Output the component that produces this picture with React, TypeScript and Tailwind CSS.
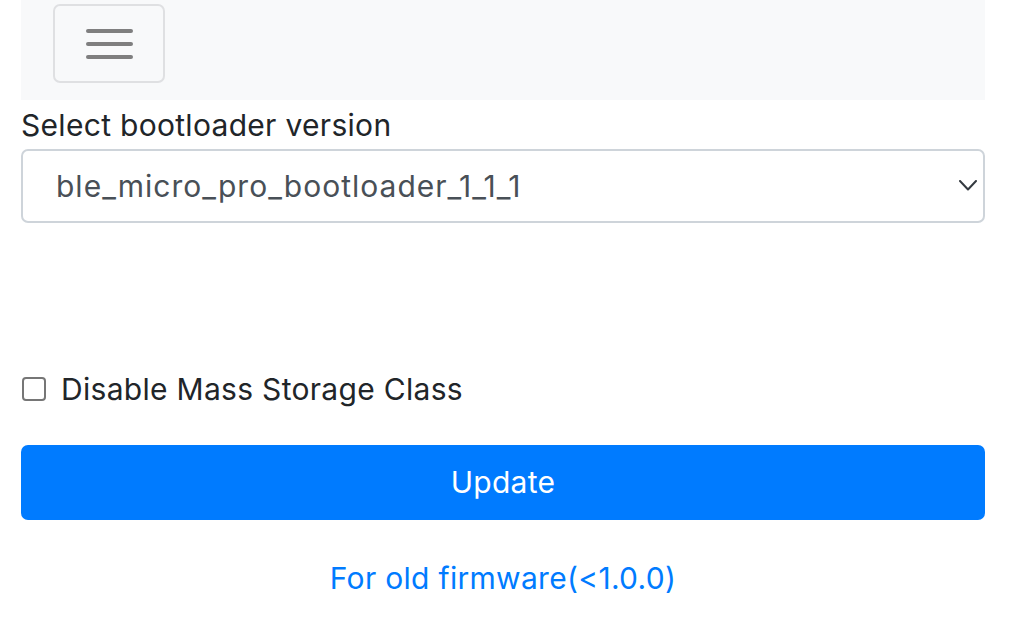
export default function App() {
  return (
    <div className="w-[1011px] h-[624px] overflow-hidden bg-white text-[#212529] tracking-[0.3px]" style={{ fontFamily: 'Inter, "Liberation Sans", Arial, sans-serif' }}>
      <div className="mx-[21px] w-[964px]">
        {/* Navbar */}
        <nav className="h-[100px] bg-[#f8f9fa] pl-[32px] pt-[4px]">
          <button className="flex h-[79px] w-[112px] flex-col items-center justify-center gap-[9px] rounded-[7px] border-2 border-[#dfe0e2]">
            <span className="h-[4px] w-[47px] rounded bg-[#7f7f7f]" />
            <span className="h-[4px] w-[47px] rounded bg-[#7f7f7f]" />
            <span className="h-[4px] w-[47px] rounded bg-[#7f7f7f]" />
          </button>
        </nav>

        {/* Bootloader select */}
        <label className="mt-[4px] block text-[30px] leading-[42px]">Select bootloader version</label>
        <div className="relative mt-[3px] flex h-[74px] items-center rounded-[7px] border-2 border-[#ced4da] pl-[33px] text-[30px] tracking-[1px] text-[#495057]">
          ble_micro_pro_bootloader_1_1_1
          <svg className="absolute right-[6px] top-[29px]" width="18" height="11" viewBox="0 0 18 11" fill="none">
            <polyline points="1,1 9,9.5 17,1" stroke="#343a40" strokeWidth="2" strokeLinecap="round" strokeLinejoin="round" />
          </svg>
        </div>

        {/* MSC checkbox */}
        <div className="mt-[145px] flex items-center gap-[15px]">
          <span className="ml-[1px] h-[24px] w-[24px] rounded-[4px] border-2 border-[#767676] bg-white" />
          <span className="text-[30px] leading-[42px]">Disable Mass Storage Class</span>
        </div>

        {/* Update */}
        <button className="mt-[35px] flex h-[75px] w-full items-center justify-center rounded-[7px] bg-[#007bff] text-[30px] text-white">
          Update
        </button>

        <div className="mt-[37px] text-center text-[30px] leading-[42px] text-[#007bff]">
          <a href="#">For old firmware(&lt;1.0.0)</a>
        </div>
      </div>
    </div>
  )
}
